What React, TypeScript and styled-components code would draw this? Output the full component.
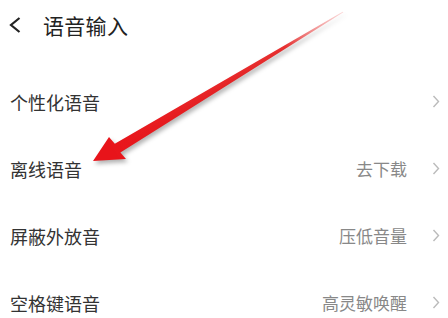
import styled, { createGlobalStyle } from 'styled-components';

const GlobalStyle = createGlobalStyle`
  html, body {
    margin: 0;
    padding: 0;
    background: #ffffff;
  }
  body {
    font-family: "Noto Sans CJK SC", "Noto Sans", sans-serif;
  }
`;

const Page = styled.div`
  position: relative;
  width: 448px;
  height: 318px;
  overflow: hidden;
  background: #fff;
`;

const Header = styled.div`
  display: flex;
  align-items: center;
  height: 50px;
  padding-left: 9px;
  gap: 22px;
`;

const Title = styled.div`
  font-size: 21px;
  color: #222;
  letter-spacing: 0.3px;
`;

const List = styled.div`
  display: flex;
  flex-direction: column;
  padding-top: 18px;
`;

const Row = styled.div`
  display: flex;
  align-items: center;
  height: 67px;
  padding: 0 8px 0 10px;
`;

const Label = styled.div`
  flex: 1;
  font-size: 18px;
  color: #333;
`;

const Value = styled.div`
  font-size: 17px;
  color: #888;
  margin-right: 25px;
`;

const ArrowLayer = styled.svg`
  position: absolute;
  left: 0;
  top: 0;
  pointer-events: none;
  filter: drop-shadow(2px 3px 2px rgba(0, 0, 0, 0.3));
`;

const BackIcon = () => (
  <svg width="12" height="16" viewBox="0 0 12 16">
    <path d="M10.5 1 L2 8 L10.5 15" fill="none" stroke="#222" strokeWidth="2.2" />
  </svg>
);

const Chevron = () => (
  <svg width="8" height="13" viewBox="0 0 8 13">
    <path d="M1.5 1 L6.5 6.5 L1.5 12" fill="none" stroke="#bbb" strokeWidth="1.4" />
  </svg>
);

const rows = [
  { label: '个性化语音', value: '' },
  { label: '离线语音', value: '去下载' },
  { label: '屏蔽外放音', value: '压低音量' },
  { label: '空格键语音', value: '高灵敏唤醒' },
];

export default function App() {
  return (
    <Page>
      <GlobalStyle />
      <Header>
        <BackIcon />
        <Title>语音输入</Title>
      </Header>
      <List>
        {rows.map((r) => (
          <Row key={r.label}>
            <Label>{r.label}</Label>
            {r.value && <Value>{r.value}</Value>}
            <Chevron />
          </Row>
        ))}
      </List>
      <ArrowLayer width="448" height="318" viewBox="0 0 448 318">
        <defs>
          <linearGradient id="shaft" x1="343" y1="12" x2="110" y2="150" gradientUnits="userSpaceOnUse">
            <stop offset="0" stopColor="#f08080" stopOpacity="0.3" />
            <stop offset="0.25" stopColor="#e41a1a" stopOpacity="0.9" />
            <stop offset="1" stopColor="#e8141a" />
          </linearGradient>
        </defs>
        <polygon
          points="343.4,12.3 342.6,11.7 114.8,143.8 109,137 93,161 126,159 120.4,152.4"
          fill="url(#shaft)"
        />
      </ArrowLayer>
    </Page>
  );
}
